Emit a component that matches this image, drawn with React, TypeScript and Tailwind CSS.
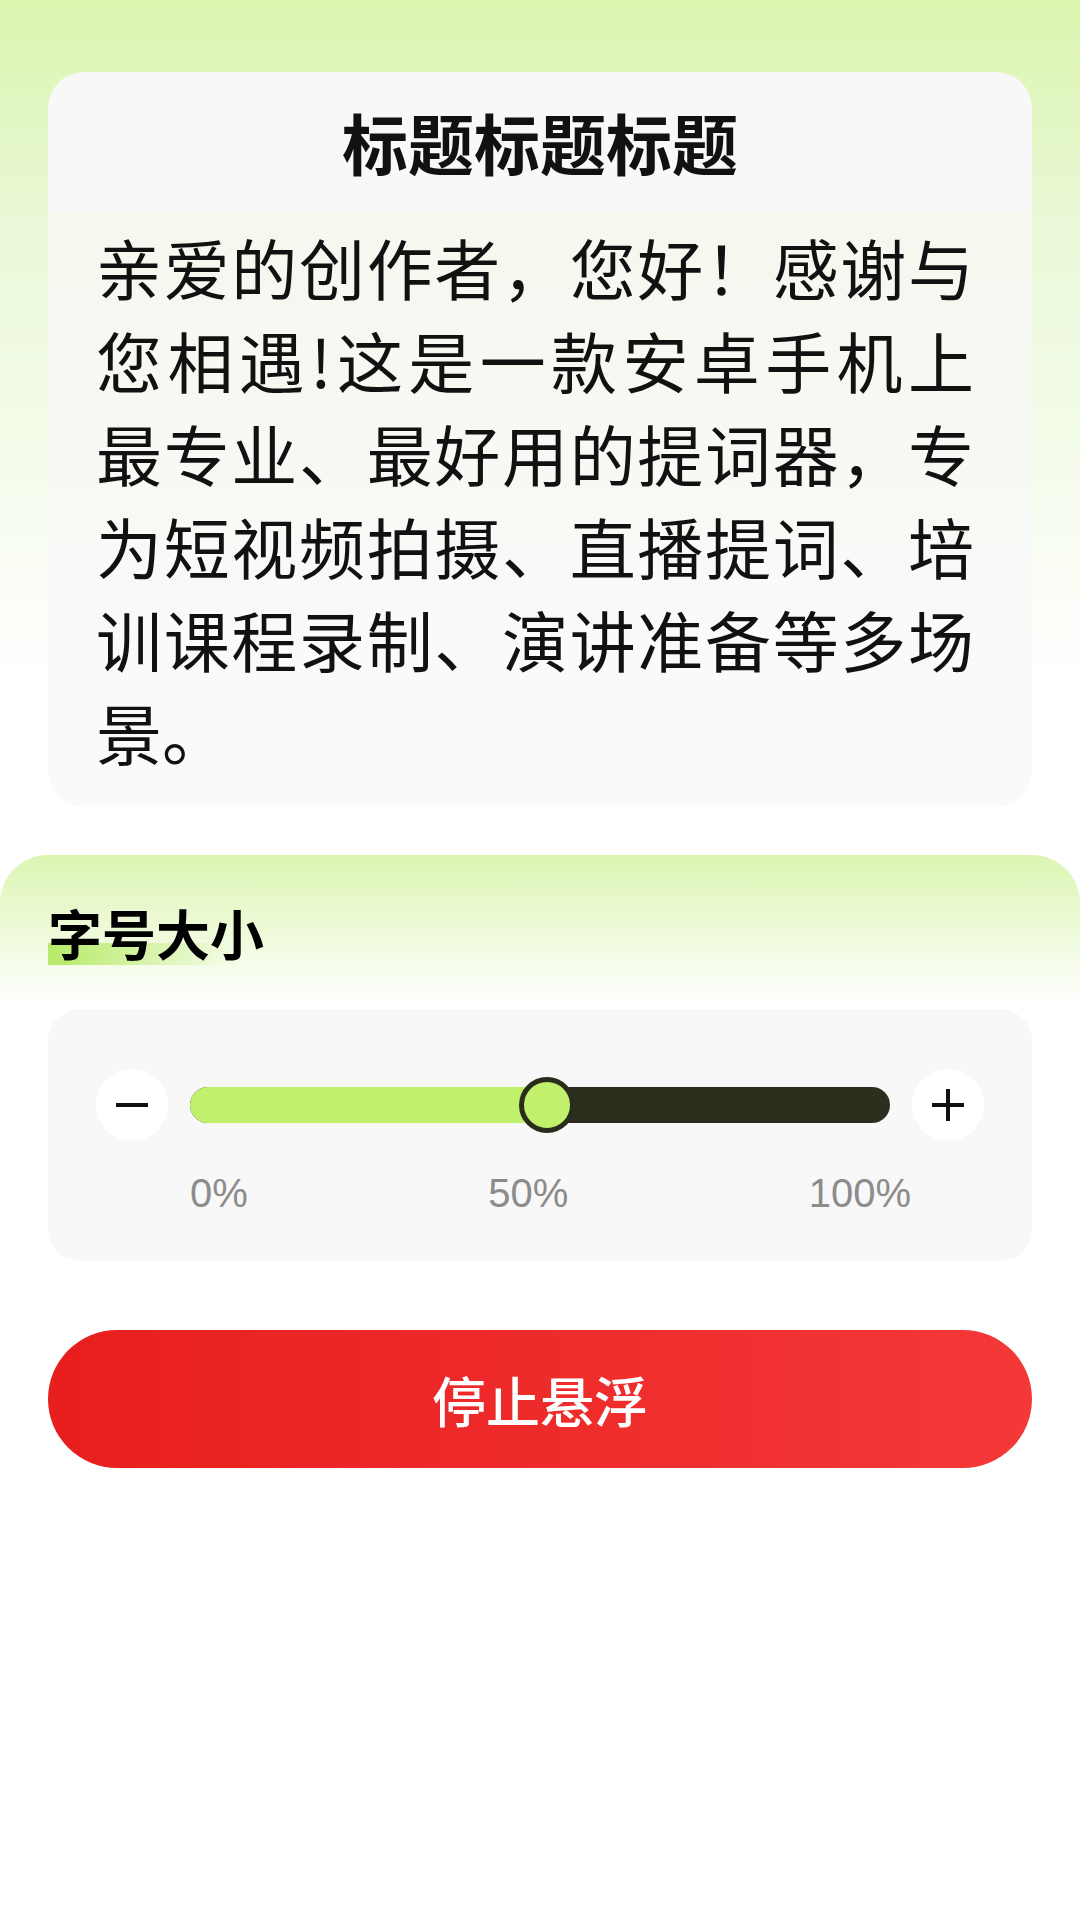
import React from 'react';

const lines = [
  '亲爱的创作者，您好！感谢与',
  '您相遇!这是一款安卓手机上',
  '最专业、最好用的提词器，专',
  '为短视频拍摄、直播提词、培',
  '训课程录制、演讲准备等多场',
  '景。',
];

const cjk = { fontFamily: '"Noto Sans CJK SC", "Noto Sans", sans-serif' };

const StepButton: React.FC<{ kind: 'minus' | 'plus' }> = ({ kind }) => (
  <button className="w-[72px] h-[72px] shrink-0 rounded-full bg-white flex items-center justify-center">
    <svg width="36" height="36" viewBox="0 0 36 36" fill="none">
      <line x1="2" y1="18" x2="34" y2="18" stroke="#111" strokeWidth="4" />
      {kind === 'plus' && <line x1="18" y1="2" x2="18" y2="34" stroke="#111" strokeWidth="4" />}
    </svg>
  </button>
);

export default function App() {
  return (
    <div
      className="w-[1080px] min-h-[1920px] bg-[linear-gradient(180deg,#dbf5ae_0px,#e9f8d6_220px,#ffffff_680px)] text-black"
      style={cjk}
    >
      {/* Preview card */}
      <div className="px-[48px] pt-[72px]">
        <div className="rounded-[36px] overflow-hidden">
          <div className="h-[138px] bg-[#f8f8f8] flex items-center justify-center">
            <h1 className="text-[66px] leading-none font-bold text-[#111]">标题标题标题</h1>
          </div>
          <div className="bg-[#f8f8f8]/70 pl-[48px] pr-[58px] pt-[10px] pb-[29px] text-[66px] leading-[93px] text-[#111]">
            {lines.map((l, i) => (
              <div
                key={i}
                className={
                  i < lines.length - 1
                    ? 'whitespace-nowrap text-justify [text-align-last:justify]'
                    : 'whitespace-nowrap'
                }
              >
                {l}
              </div>
            ))}
          </div>
        </div>
      </div>

      {/* Font size panel */}
      <div className="mt-[48px] rounded-t-[48px] bg-[linear-gradient(180deg,#dcf5b2_0px,#ffffff_150px)] pb-[60px]">
        <div className="px-[48px] pt-[51px]">
          <div className="relative inline-block">
            <span className="absolute left-0 top-[37px] w-[185px] h-[22px] bg-[linear-gradient(90deg,#b6ea66,rgba(200,240,140,0))]" />
            <span className="relative text-[54px] leading-[54px] font-bold">字号大小</span>
          </div>
        </div>

        <div className="mx-[48px] mt-[48px] rounded-[32px] bg-[#f8f8f8] px-[48px] pt-[60px] pb-[44px]">
          <div className="flex items-center gap-[22px]">
            <StepButton kind="minus" />
            <div className="relative flex-1 h-[36px] rounded-full bg-[#2c2f1e]">
              <div className="absolute left-0 top-0 h-full w-[51%] rounded-l-full bg-[#c0f06c]" />
              <div className="absolute top-1/2 left-[51%] -translate-x-1/2 -translate-y-1/2 w-[56px] h-[56px] rounded-full bg-[#c0f06c] border-[5px] border-[#2a2d1c]" />
            </div>
            <StepButton kind="plus" />
          </div>
          <div
            className="flex justify-between pl-[94px] pr-[73px] mt-[28px] text-[40px] leading-[48px] text-[#8c8c8c]"
            style={{ fontFamily: '"Liberation Sans", Arial, sans-serif' }}
          >
            <span>0%</span>
            <span>50%</span>
            <span>100%</span>
          </div>
        </div>

        <div className="px-[48px] mt-[69px]">
          <button className="w-full h-[138px] rounded-full bg-[linear-gradient(90deg,#e81e1e,#f43838)] text-white text-[54px] font-medium flex items-center justify-center">
            停止悬浮
          </button>
        </div>
      </div>
    </div>
  );
}
